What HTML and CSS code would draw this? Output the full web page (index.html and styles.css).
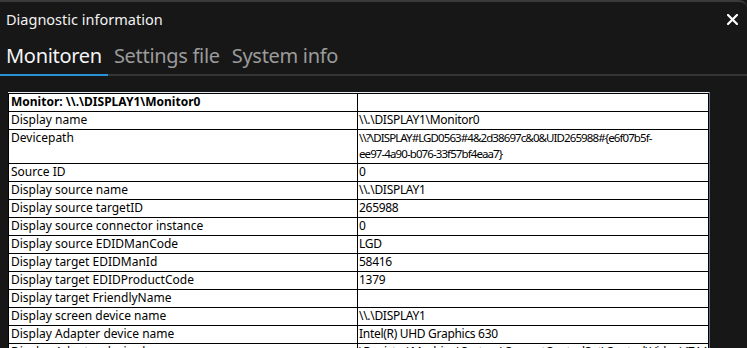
FILE: index.html
```html
<!DOCTYPE html>
<html lang="en">
<head>
<meta charset="utf-8">
<title>Diagnostic information</title>
<link rel="stylesheet" href="styles.css">
</head>
<body>
<div class="window">
  <div class="titlebar">
    <span class="title">Diagnostic information</span>
    <span class="close" aria-label="Close">
      <svg width="11" height="11" viewBox="0 0 11 11"><path d="M1 1 L10 10 M10 1 L1 10" stroke="#fff" stroke-width="2.2" stroke-linecap="square"/></svg>
    </span>
  </div>
  <div class="tabs">
    <span class="tab active">Monitoren</span>
    <span class="tab">Settings file</span>
    <span class="tab">System info</span>
  </div>
  <div class="content">
    <div class="grid">
      <table>
        <colgroup><col class="c1"><col class="c2"></colgroup>
        <tr class="head"><td>Monitor: \\.\DISPLAY1\Monitor0</td><td></td></tr>
        <tr><td>Display name</td><td>\\.\DISPLAY1\Monitor0</td></tr>
        <tr><td>Devicepath</td><td class="path">\\?\DISPLAY#LGD0563#4&amp;2d38697c&amp;0&amp;UID265988#{e6f07b5f-<br>ee97-4a90-b076-33f57bf4eaa7}</td></tr>
        <tr><td>Source ID</td><td>0</td></tr>
        <tr><td>Display source name</td><td>\\.\DISPLAY1</td></tr>
        <tr><td>Display source targetID</td><td>265988</td></tr>
        <tr><td>Display source connector instance</td><td>0</td></tr>
        <tr><td>Display source EDIDManCode</td><td>LGD</td></tr>
        <tr><td>Display target EDIDManId</td><td>58416</td></tr>
        <tr><td>Display target EDIDProductCode</td><td>1379</td></tr>
        <tr><td>Display target FriendlyName</td><td></td></tr>
        <tr><td>Display screen device name</td><td>\\.\DISPLAY1</td></tr>
        <tr><td>Display Adapter device name</td><td>Intel(R) UHD Graphics 630</td></tr>
        <tr><td>Display Adapter device key</td><td>\Registry\Machine\System\CurrentControlSet\Control\Video\{7A1D}</td></tr>
      </table>
    </div>
  </div>
</div>
</body>
</html>
```
FILE: styles.css
```css
html, body {
  margin: 0;
  padding: 0;
}
body {
  width: 747px;
  height: 348px;
  overflow: hidden;
  background: #171717;
  font-family: "Noto Sans", "Open Sans", sans-serif;
}
.window {
  height: 346px;
  border-top: 2px solid #3a3a3a;
  border-top-right-radius: 8px;
  background: #171717;
  overflow: hidden;
}
.titlebar {
  height: 34px;
  display: flex;
  align-items: center;
  justify-content: space-between;
  padding: 0 9px 0 6px;
  color: #f2f2f2;
  font-size: 14.5px;
}
.close {
  display: flex;
  width: 11px;
  height: 11px;
  margin-top: 1px;
}
.tabs {
  display: flex;
  margin-top: 6px;
  border-bottom: 2px solid #353535;
}
.tab {
  padding: 0 6px 4px;
  font-size: 20px;
  letter-spacing: -0.3px;
  line-height: 28px;
  color: #9b9b9b;
}
.tab.active {
  color: #f4f4f4;
  border-bottom: 2px solid #2a93d5;
  margin-bottom: -2px;
}
.content {
  padding: 16px 0 0 8px;
}
.grid {
  width: 700px;
  background: #fff;
  border-top: 1px solid #e4eaf0;
  border-right: 2px solid #5c6c82;
}
table {
  width: 700px;
  table-layout: fixed;
  border-collapse: collapse;
  font-size: 12px;
  line-height: 16px;
  color: #000;
}
col.c1 { width: 349px; }
col.c2 { width: 351px; }
td {
  border: 1px solid #000;
  padding: 0 2px 1px;
  height: 16px;
  vertical-align: top;
  white-space: nowrap;
  overflow: hidden;
}
td + td {
  padding-left: 1px;
  letter-spacing: -0.3px;
}
td.path {
  font-size: 11.5px;
  letter-spacing: -0.9px;
}
tr.head td {
  font-weight: bold;
}
```
